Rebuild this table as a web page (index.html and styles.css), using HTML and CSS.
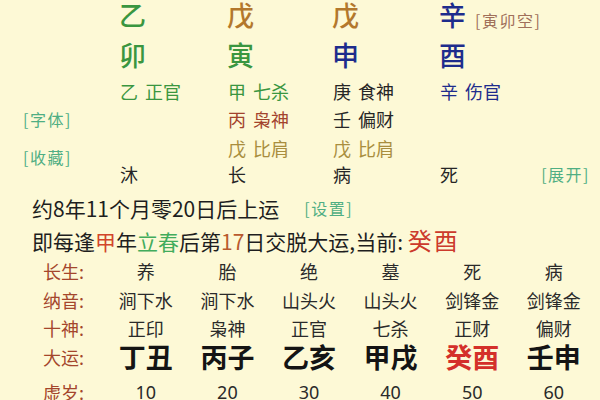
FILE: index.html
```html
<!DOCTYPE html>
<html lang="zh">
<head>
<meta charset="utf-8">
<link rel="stylesheet" href="styles.css">
</head>
<body>
<div class="page">
  <div class="chart">
    <div class="big green c1 r1">乙</div>
    <div class="big brown c2 r1">戊</div>
    <div class="big brown c3 r1">戊</div>
    <div class="big blue c4 r1">辛</div>
    <div class="tag kong c5 r1">[寅卯空]</div>

    <div class="big green c1 r2">卯</div>
    <div class="big green c2 r2">寅</div>
    <div class="big blue c3 r2">申</div>
    <div class="big blue c4 r2">酉</div>

    <div class="hid green c1 r3">乙 正官</div>
    <div class="hid green c2 r3">甲 七杀</div>
    <div class="hid dark c3 r3">庚 食神</div>
    <div class="hid blue c4 r3">辛 伤官</div>

    <div class="tag link side c0 r4">[字体]</div>
    <div class="hid red c2 r4">丙 枭神</div>
    <div class="hid dark c3 r4">壬 偏财</div>

    <div class="tag link side fav c0 r56">[收藏]</div>
    <div class="hid olive c2 r5">戊 比肩</div>
    <div class="hid olive c3 r5">戊 比肩</div>

    <div class="hid dark c1 r6">沐</div>
    <div class="hid dark c2 r6">长</div>
    <div class="hid dark c3 r6">病</div>
    <div class="hid dark c4 r6">死</div>
    <div class="tag link c5 r6 right">[展开]</div>
  </div>

  <div class="info">
    <div class="line">约8年11个月零20日后上运<span class="tag link set">[设置]</span></div>
    <div class="line">即每逢<span class="jia">甲</span>年<span class="chun">立春</span>后第<span class="num">17</span>日交脱大运,当前: <span class="cur">癸酉</span></div>
  </div>

  <div class="table">
    <div class="lab">长生:</div>
    <div class="v">养</div><div class="v">胎</div><div class="v">绝</div><div class="v">墓</div><div class="v">死</div><div class="v">病</div>

    <div class="lab">纳音:</div>
    <div class="v">涧下水</div><div class="v">涧下水</div><div class="v">山头火</div><div class="v">山头火</div><div class="v">剑锋金</div><div class="v">剑锋金</div>

    <div class="lab">十神:</div>
    <div class="v">正印</div><div class="v">枭神</div><div class="v">正官</div><div class="v">七杀</div><div class="v">正财</div><div class="v">偏财</div>

    <div class="lab">大运:</div>
    <div class="v dy">丁丑</div><div class="v dy">丙子</div><div class="v dy">乙亥</div><div class="v dy">甲戌</div><div class="v dy now">癸酉</div><div class="v dy">壬申</div>

    <div class="lab">虚岁:</div>
    <div class="v age">10</div><div class="v age">20</div><div class="v age">30</div><div class="v age">40</div><div class="v age">50</div><div class="v age">60</div>
  </div>
</div>
</body>
</html>
```

FILE: styles.css
```css
html, body {
  margin: 0;
  padding: 0;
  background: #fdf9d6;
}
body {
  width: 600px;
  height: 400px;
  overflow: hidden;
  font-family: "Noto Sans CJK SC", "Noto Sans", sans-serif;
  color: #222;
}
.page {
  display: flex;
  flex-direction: column;
}
.chart {
  display: grid;
  grid-template-columns: 120px 108px 105px 107px 35px 1fr;
  grid-template-rows: 30px 50px 22px 34px 24px 28px;
}
.c0 { grid-column: 1; }
.c1 { grid-column: 2; }
.c2 { grid-column: 3; }
.c3 { grid-column: 4; }
.c4 { grid-column: 5; }
.c5 { grid-column: 6; }
.r1 { grid-row: 1; }
.r2 { grid-row: 2; }
.r3 { grid-row: 3; }
.r4 { grid-row: 4; }
.r5 { grid-row: 5; }
.r6 { grid-row: 6; }
.r56 { grid-row: 5 / span 2; }

.big {
  font-size: 27px;
  line-height: 30px;
  font-weight: 500;
  align-self: center;
  margin-left: -1px;
}
.hid {
  font-size: 18px;
  line-height: 22px;
  word-spacing: 3px;
  align-self: center;
  white-space: nowrap;
}
.tag {
  font-size: 16px;
  letter-spacing: 1.5px;
  line-height: 20px;
  white-space: nowrap;
}
.kong {
  color: #a0705a;
  align-self: end;
  margin-bottom: 0;
}
.link {
  color: #4fae83;
  align-self: center;
}
.side { padding-left: 23px; }
.fav { margin-top: -10px; }
.right { justify-self: end; padding-right: 10px; }

.green { color: #3a9640; }
.brown { color: #b3782c; }
.blue { color: #1e2c8c; }
.dark { color: #262626; }
.red { color: #a2432d; }
.olive { color: #a98e3e; }

.info {
  margin-top: 4px;
  padding-left: 32px;
}
.line {
  font-size: 21px;
  line-height: 32px;
  height: 32px;
  white-space: nowrap;
  color: #1e1e1e;
}
.set {
  margin-left: 25px;
  vertical-align: 2px;
}
.jia { color: #d2452a; }
.chun { color: #42ac5c; }
.num { color: #b85a2e; }
.cur {
  color: #cc3a2c;
  font-size: 24px;
  letter-spacing: 2px;
}

.table {
  display: grid;
  grid-template-columns: 105px repeat(6, 81.6px);
  grid-template-rows: 30px 28px 28px 30px 40px;
  align-items: center;
  line-height: 24px;
}
.lab {
  padding-left: 43px;
  font-size: 18px;
  color: #a4462c;
  white-space: nowrap;
}
.v {
  text-align: center;
  font-size: 18px;
  color: #2a2a2a;
  white-space: nowrap;
}
.v.dy {
  font-size: 27px;
  line-height: 30px;
  font-weight: 700;
  color: #141414;
}
.v.dy.now { color: #d4302a; }
.v.age {
  font-family: "Noto Sans", "Noto Sans CJK SC", sans-serif;
  font-size: 18px;
}
```
